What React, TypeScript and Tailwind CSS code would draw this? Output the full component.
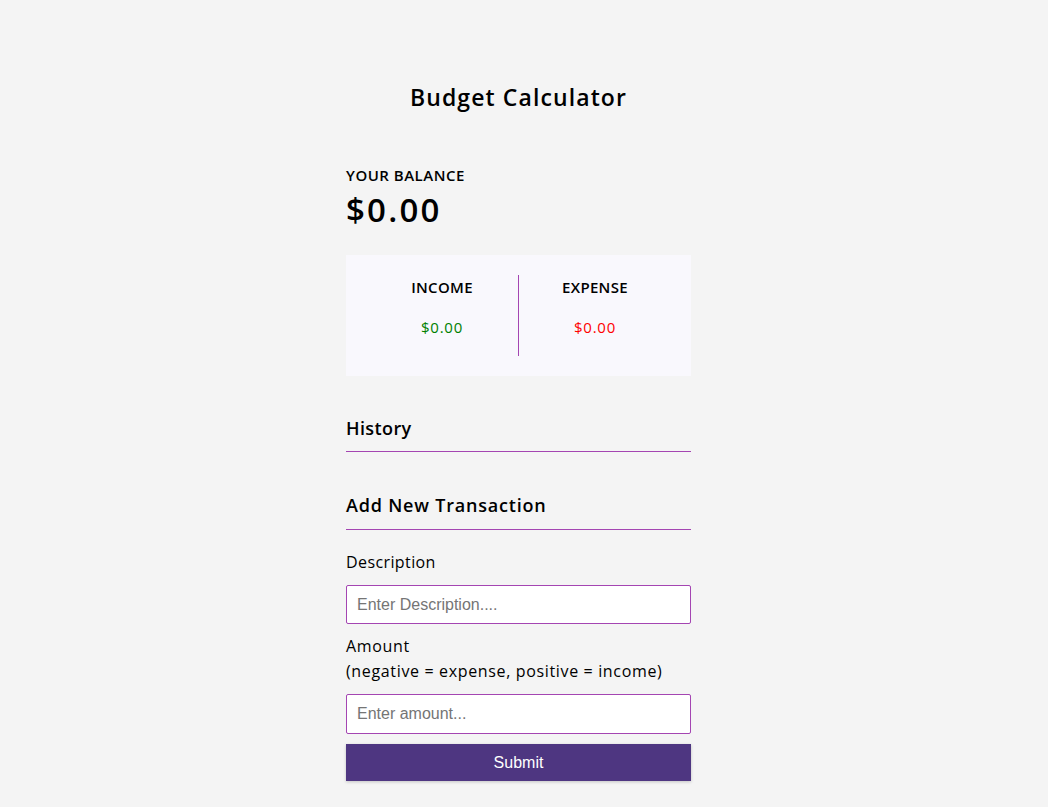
import React from "react"

const font = { fontFamily: '"Open Sans", "Noto Sans", sans-serif' }
const arial = { fontFamily: '"Liberation Sans", Arial, sans-serif' }

const App = () => {
  const [text, setText] = React.useState("")
  const [amount, setAmount] = React.useState("")

  return (
    <div className="min-h-[807px] w-full bg-[#f4f4f4] text-black" style={font}>
      <div className="flex justify-center pr-[11px]">
        <div className="w-[345px] flex flex-col">
          <h2 className="mt-[82px] text-center text-[23px] leading-[30px] font-semibold tracking-[1.1px]">
            Budget Calculator
          </h2>

          <h4 className="mt-[53px] text-[15px] leading-[20px] font-semibold uppercase tracking-[0.5px]">
            Your Balance
          </h4>
          <h1 className="mt-[5px] text-[33px] leading-[40px] font-semibold tracking-[2.2px]">$0.00</h1>

          <div className="mt-[25px] flex bg-[#f9f8fd] p-5">
            <div className="flex-1 flex flex-col items-center border-r border-[#a445b2] h-[81px]">
              <h4 className="mt-[2px] text-[15px] leading-[20px] font-semibold uppercase tracking-[0.3px]">Income</h4>
              <p className="mt-[20px] text-[15px] leading-[20px] text-[#008000] tracking-[0.8px]">$0.00</p>
            </div>
            <div className="flex-1 flex flex-col items-center h-[81px]">
              <h4 className="mt-[2px] text-[15px] leading-[20px] font-semibold uppercase tracking-[0.3px]">Expense</h4>
              <p className="mt-[20px] text-[15px] leading-[20px] text-[#ff0000] tracking-[0.8px]">$0.00</p>
            </div>
          </div>

          <h3 className="mt-[40px] pb-[11px] border-b border-[#a445b2] text-[18px] leading-[24px] font-semibold tracking-[0.4px]">
            History
          </h3>
          <ul />

          <h3 className="mt-[41px] pb-[12px] border-b border-[#a445b2] text-[18px] leading-[24px] font-semibold tracking-[0.8px]">
            Add New Transaction
          </h3>

          <form className="flex flex-col" onSubmit={(e) => e.preventDefault()}>
            <label className="mt-[20px] text-[16px] leading-[24px] tracking-[0.4px]">Description</label>
            <input
              type="text"
              value={text}
              onChange={(e) => setText(e.target.value)}
              placeholder="Enter Description...."
              className="mt-[11px] h-[39px] bg-white border border-[#a445b2] rounded-[2px] px-[10px] text-[16px] placeholder:text-[#757575] outline-none"
              style={arial}
            />
            <label className="mt-[10px] text-[16px] leading-[25px] tracking-[0.65px]">
              Amount
              <br />
              (negative = expense, positive = income)
            </label>
            <input
              type="number"
              value={amount}
              onChange={(e) => setAmount(e.target.value)}
              placeholder="Enter amount..."
              className="mt-[10px] h-[40px] bg-white border border-[#a445b2] rounded-[2px] px-[10px] text-[16px] placeholder:text-[#757575] outline-none"
              style={arial}
            />
            <button
              className="mt-[10px] h-[37px] bg-[#4e3681] text-white text-[16px] shadow-[0_1px_3px_rgba(0,0,0,0.2)]"
              style={arial}
            >
              Submit
            </button>
          </form>
        </div>
      </div>
    </div>
  )
}

export default App
